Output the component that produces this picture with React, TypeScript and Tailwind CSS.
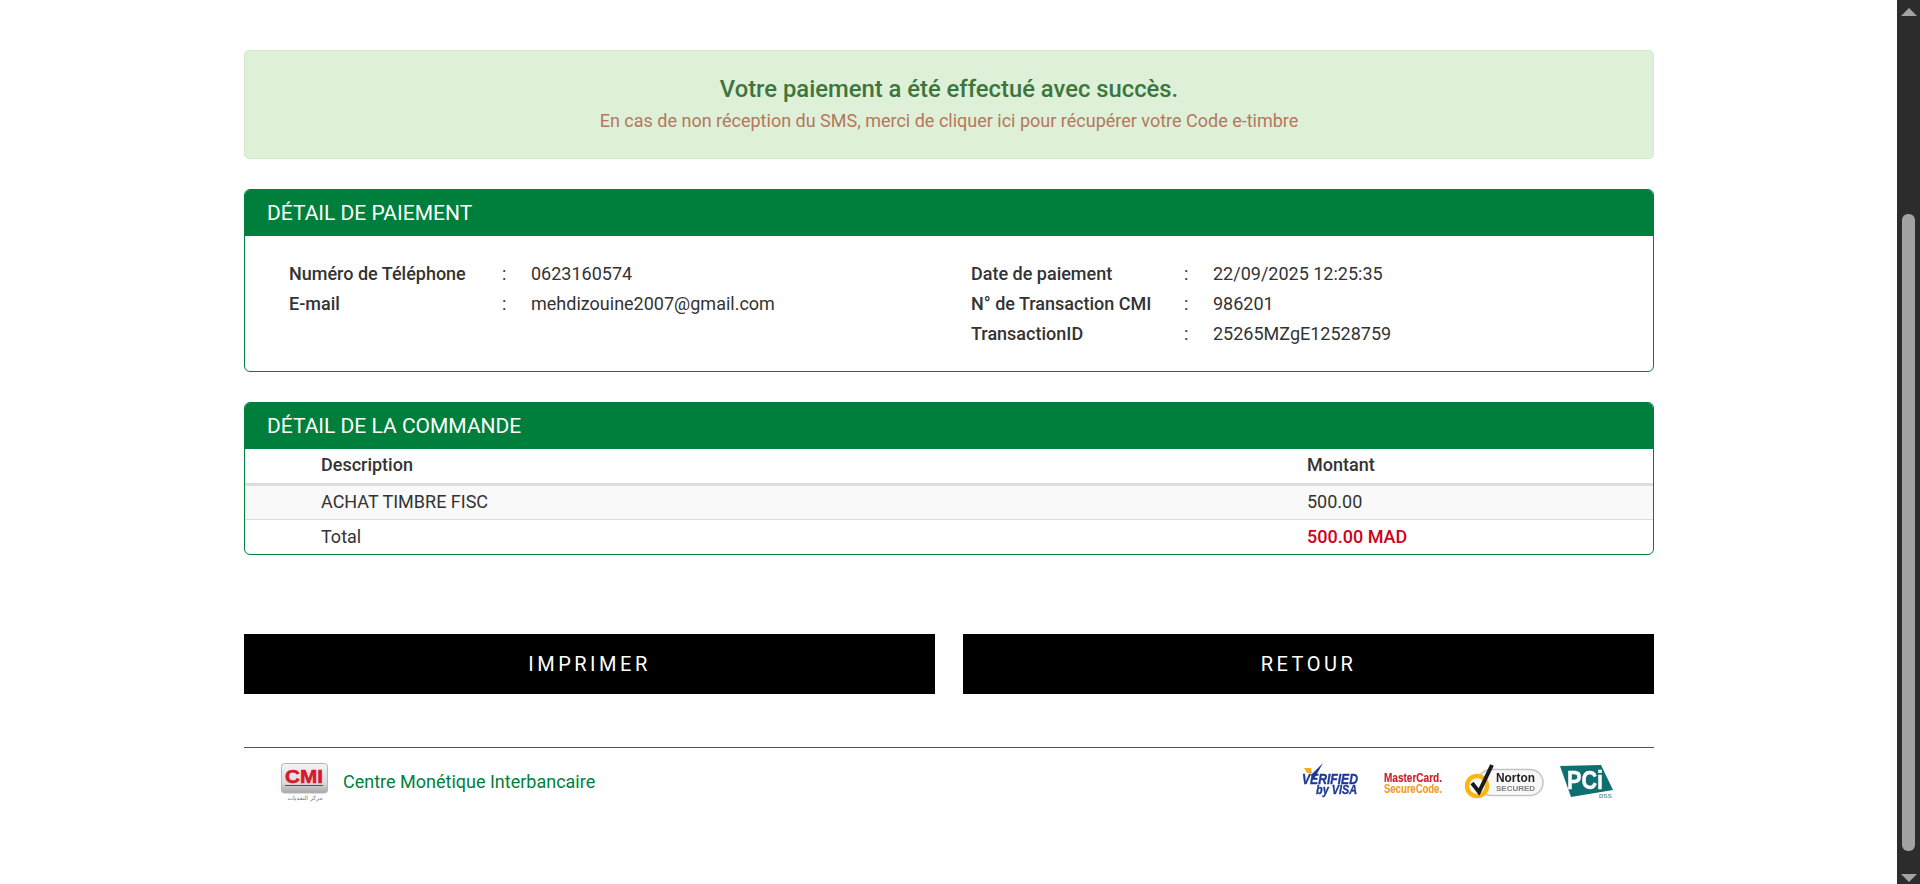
import React from 'react'

const FONT = "font-['Roboto',sans-serif]"

const InfoRow = ({ label, value }: { label: string; value: string }) => (
  <div className="flex h-[30px] items-center text-lg text-[#333]">
    <div className="w-[213px] font-medium">{label}</div>
    <div className="w-[29px]">:</div>
    <div>{value}</div>
  </div>
)

const PanelTitle = ({ title }: { title: string }) => (
  <div className="flex h-[46px] items-center bg-[#007f3c] px-[22px] pt-[2px] text-[21px] text-white">{title}</div>
)

const CmiLogo = () => (
  <svg width="47" height="38" viewBox="0 0 47 38" className="shrink-0 overflow-visible">
    <defs>
      <linearGradient id="cmi-bg" x1="0" y1="0" x2="0" y2="1">
        <stop offset="0" stopColor="#f4f4f4" />
        <stop offset="0.65" stopColor="#dcdcdc" />
        <stop offset="1" stopColor="#a6a6a6" />
      </linearGradient>
    </defs>
    <rect x="0.5" y="0.5" width="46" height="29.5" rx="3" fill="url(#cmi-bg)" stroke="#b5b5b5" />
    <text x="4" y="20" fontFamily="Liberation Sans" fontWeight="700" fontSize="19" fill="#d3192a" stroke="#d3192a" strokeWidth="0.6" textLength="38" lengthAdjust="spacingAndGlyphs">CMI</text>
    <rect x="4" y="22" width="38" height="1" fill="#d3192a" />
    <text x="24" y="36.5" textAnchor="middle" fontFamily="DejaVu Sans" fontSize="6" fill="#777">مركز النقديات</text>
  </svg>
)

const VerifiedVisa = () => (
  <svg width="58" height="33" viewBox="0 0 58 33" className="overflow-visible">
    <path d="M3 5 L10 5 L11 10 L6 10 Z" fill="#f5ac1c" />
    <path d="M10 12 L22 0 L13 16 Z" fill="#1c3a94" />
    <text x="1" y="20.5" fontFamily="Liberation Sans" fontWeight="700" fontStyle="italic" fontSize="14" fill="#1c3a94" stroke="#1c3a94" strokeWidth="0.35" textLength="56" lengthAdjust="spacingAndGlyphs">VERIFIED</text>
    <text x="15" y="31" fontFamily="Liberation Sans" fontWeight="700" fontStyle="italic" fontSize="13" fill="#1c3a94" stroke="#1c3a94" strokeWidth="0.35" textLength="41" lengthAdjust="spacingAndGlyphs">by VISA</text>
  </svg>
)

const MasterCardCode = () => (
  <svg width="59" height="22" viewBox="0 0 59 22" className="overflow-visible">
    <text x="0" y="10" fontFamily="Liberation Sans" fontWeight="700" fontSize="13" fill="#c8202f" stroke="#c8202f" strokeWidth="0.15" textLength="58" lengthAdjust="spacingAndGlyphs">MasterCard.</text>
    <text x="0" y="20.5" fontFamily="Liberation Sans" fontWeight="700" fontSize="13" fill="#f29a26" stroke="#f29a26" strokeWidth="0.15" textLength="58" lengthAdjust="spacingAndGlyphs">SecureCode.</text>
  </svg>
)

const NortonSecured = () => (
  <svg width="80" height="34" viewBox="0 0 80 34" className="overflow-visible">
    <rect x="14" y="5.5" width="65" height="26" rx="13" fill="#f8f8f8" stroke="#c4c4c4" strokeWidth="1.5" />
    <circle cx="13" cy="22" r="10" fill="#fff" stroke="#fdb511" strokeWidth="4.5" />
    <path d="M8 19 L15 28 L28 1" fill="none" stroke="#1b1b1b" strokeWidth="4" />
    <text x="32" y="18" fontFamily="Liberation Sans" fontWeight="700" fontSize="13" fill="#222" textLength="39" lengthAdjust="spacingAndGlyphs">Norton</text>
    <text x="32" y="27" fontFamily="Liberation Sans" fontWeight="700" fontSize="8" fill="#808080" textLength="39" lengthAdjust="spacingAndGlyphs">SECURED</text>
  </svg>
)

const PciLogo = () => (
  <svg width="53" height="34" viewBox="0 0 53 34" className="overflow-visible">
    <path d="M0 2 L41 1 L53 26 L11 33 Z" fill="#0f6e70" />
    <text x="7" y="25" fontFamily="Liberation Sans" fontWeight="700" fontSize="25" fill="#fff" stroke="#fff" strokeWidth="0.5" textLength="36" lengthAdjust="spacingAndGlyphs">PCi</text>
    <text x="39" y="33.5" fontFamily="Liberation Sans" fontWeight="700" fontSize="6" fill="#5f9c9c" textLength="13" lengthAdjust="spacingAndGlyphs">DSS</text>
  </svg>
)

const Scrollbar = () => (
  <div className="flex h-full w-[23px] shrink-0 flex-col items-center bg-[#2c2c2c]">
    <div className="mt-[8px] h-0 w-0 border-x-[8px] border-b-[8px] border-x-transparent border-b-[#a3a3a3]" />
    <div className="mt-[198px] h-[637px] w-[13px] rounded-[6px] bg-[#a3a3a3]" />
    <div className="mt-[23px] h-0 w-0 border-x-[8px] border-t-[8px] border-x-transparent border-t-[#a3a3a3]" />
  </div>
)

export default function App() {
  return (
    <div className={`flex h-screen overflow-hidden bg-white ${FONT}`}>
      <div className="min-w-0 flex-1 pl-[244px] pr-[243px] pt-[50px]">
        <div className="flex h-[109px] flex-col items-center rounded-[5px] border border-[#d6e9c6] bg-[#dff0d8] pt-[22px]">
          <div className="text-[23.8px] leading-[32px] font-medium text-[#3c763d]">Votre paiement a été effectué avec succès.</div>
          <div className="mt-[3px] text-lg leading-[26px] text-[#b3785c]">En cas de non réception du SMS, merci de cliquer ici pour récupérer votre Code e-timbre</div>
        </div>

        <div className="mt-[30px] h-[183px] overflow-hidden rounded-[6px] border border-[#007f3c]">
          <PanelTitle title="DÉTAIL DE PAIEMENT" />
          <div className="grid grid-cols-[682px_1fr] pl-[44px] pt-[23px]">
            <div>
              <InfoRow label="Numéro de Téléphone" value="0623160574" />
              <InfoRow label="E-mail" value="mehdizouine2007@gmail.com" />
            </div>
            <div>
              <InfoRow label="Date de paiement" value="22/09/2025 12:25:35" />
              <InfoRow label="N° de Transaction CMI" value="986201" />
              <InfoRow label="TransactionID" value="25265MZgE12528759" />
            </div>
          </div>
        </div>

        <div className="mt-[30px] h-[153px] overflow-hidden rounded-[6px] border border-[#007f3c]">
          <PanelTitle title="DÉTAIL DE LA COMMANDE" />
          <div className="text-lg text-[#333]">
            <div className="flex h-[37px] items-center border-b-[3px] border-[#ddd] pb-[2px] font-medium">
              <div className="w-[1062px] pl-[76px]">Description</div>
              <div>Montant</div>
            </div>
            <div className="flex h-[34px] items-center border-b border-[#ddd] bg-[#f9f9f9] pb-[2px]">
              <div className="w-[1062px] pl-[76px]">ACHAT TIMBRE FISC</div>
              <div>500.00</div>
            </div>
            <div className="flex h-[33px] items-center">
              <div className="w-[1062px] pl-[76px]">Total</div>
              <div className="font-medium text-[#d0021b]">500.00 MAD</div>
            </div>
          </div>
        </div>

        <div className="mt-[79px] grid grid-cols-2 gap-[28px]">
          <button className="h-[60px] bg-black text-[20px] tracking-[3.5px] text-white">IMPRIMER</button>
          <button className="h-[60px] bg-black text-[20px] tracking-[3.5px] text-white">RETOUR</button>
        </div>

        <div className="mt-[53px] flex items-start justify-between border-t border-[#007f3c] pl-[37px] pr-[41px] pt-[15px]">
          <div className="flex items-start gap-[15px]">
            <CmiLogo />
            <div className="mt-[7px] text-lg leading-[24px] text-[#007f3c]">Centre Monétique Interbancaire</div>
          </div>
          <div className="flex items-start blur-[0.6px]">
            <VerifiedVisa />
            <div className="ml-[25px] mt-[9px]"><MasterCardCode /></div>
            <div className="ml-[21px] mt-[1px]"><NortonSecured /></div>
            <div className="ml-[16px] mt-[1px]"><PciLogo /></div>
          </div>
        </div>
      </div>
      <Scrollbar />
    </div>
  )
}
